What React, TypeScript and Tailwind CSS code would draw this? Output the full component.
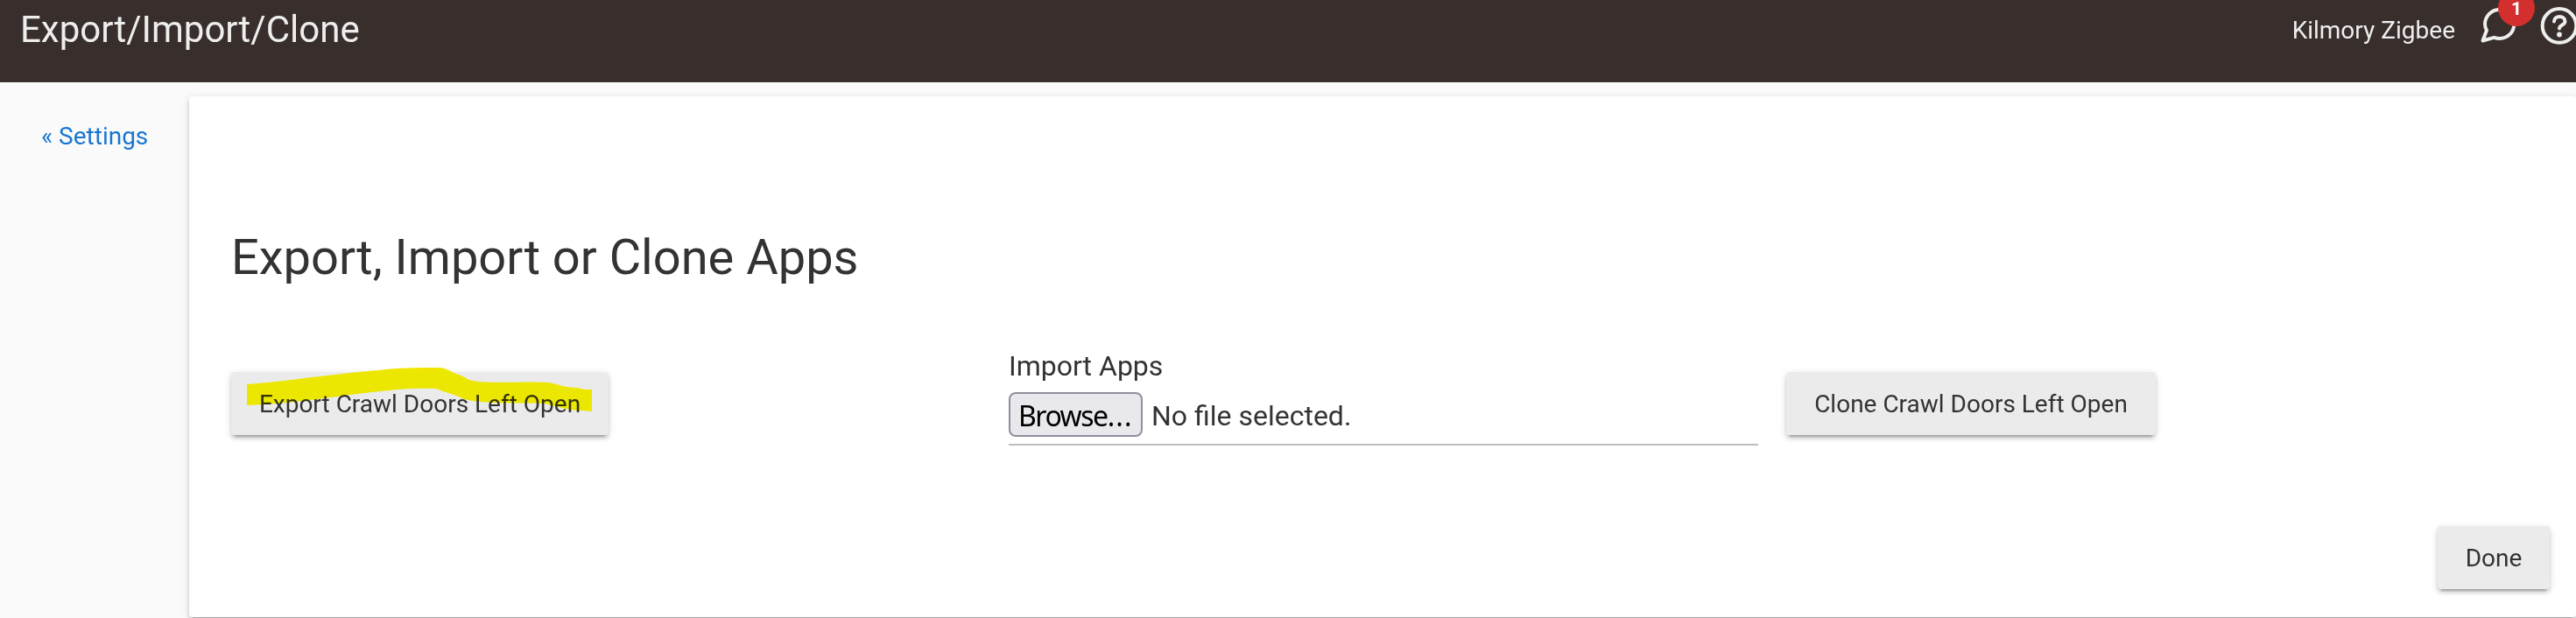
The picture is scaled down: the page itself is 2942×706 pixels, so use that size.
const raised =
  "shadow-[0_4px_4px_0_rgba(0,0,0,0.14),0_6px_2px_-4px_rgba(0,0,0,0.2),0_2px_10px_0_rgba(0,0,0,0.12)]";

function RaisedButton({ label, width }: { label: string; width: string }) {
  return (
    <button
      type="button"
      className={`${width} ${raised} h-[72px] shrink-0 rounded bg-[#ebebeb] text-center text-[28px] leading-[74px] whitespace-nowrap`}
    >
      {label}
    </button>
  );
}

function Header() {
  return (
    <header className="flex h-[94px] items-start justify-between overflow-hidden bg-[#382e2c] text-[#eeeeee]">
      <h1 className="pt-[9px] pl-[23px] text-[42px] leading-[49px]">Export/Import/Clone</h1>

      <div className="flex shrink-0 items-start">
        <span className="mr-[24px] pt-[18px] text-[28px] leading-[33px]">Kilmory Zigbee</span>

        <div className="relative mr-[18px] h-[60px] w-[54px]">
          <svg viewBox="0 0 54 60" className="h-[60px] w-[54px]" fill="none" stroke="currentColor" strokeWidth="4" strokeLinejoin="round">
            <path d="M7.500 46.500 L12 34.500 C10.500 32 10 30 10 27.500 C10 18.500 17.500 11 26.700 11 C36 11 43.300 18.500 43.300 27.500 C43.300 36.700 36 44 26.700 44 C24.500 44 22.500 43.600 20.500 42.800 Z" />
          </svg>
          <span className="absolute -top-[12px] left-[25px] flex h-[42px] w-[42px] items-center justify-center rounded-full bg-[#d32f2f] pt-[2px] text-[21px] leading-[18px] font-bold text-white">
            1
          </span>
        </div>

        <svg viewBox="0 0 42 60" className="h-[60px] w-[42px]" fill="none" stroke="currentColor" strokeWidth="4" strokeLinecap="round">
          <circle cx="23" cy="29.400" r="19.300" />
          <path d="M17 24.500 C17 17 29.500 17 29.500 24.500 C29.500 28.500 23 28.500 23 32.500" />
          <circle cx="23" cy="39.500" r="2.900" fill="currentColor" stroke="none" />
        </svg>
      </div>
    </header>
  );
}

export default function App() {
  return (
    <div className="flex h-[706px] w-[2942px] flex-col overflow-hidden bg-[#fafafa] font-[Roboto,sans-serif] text-[#333333]">
      <Header />

      <div className="flex">
        <nav className="w-[216px] shrink-0 pt-[45px] pl-[47px]">
          <a href="#" className="text-[28px] leading-[33px] text-[#1976d2]">
            « Settings
          </a>
        </nav>

        <main className={`${raised} mt-4 flex h-[595px] grow flex-col rounded bg-white pl-12`}>
          <h2 className="pt-[151px] text-[56px] leading-[66px]">Export, Import or Clone Apps</h2>

          <div className="mt-[61px] grid h-[140px] grid-cols-[856px_856px_856px] gap-8">
            <div className="relative pt-[37px]">
              <RaisedButton label="Export Crawl Doors Left Open" width="w-[431px]" />
              {/* highlighter stroke */}
              <svg viewBox="0 0 431 80" className="absolute top-[29px] left-0 h-[80px] w-[431px] mix-blend-darken">
                <path
                  fill="#f0e700"
                  d="M18 22 L41 20 C80 16 120 10 168 6 C190 3 210 3 239 3 C248 4 252 9 260 11 C268 14 270 17 276 18 C300 22 340 18 362 20 C375 22 380 26 396 26 L403 28 L412 28 L412 53 L401 52 C385 52 372 47 358 44 C330 43 290 45 266 39 C255 33 248 33 234 27 C205 26 190 28 170 30 C120 35 80 43 36 45 L18 46 Z"
                />
              </svg>
            </div>

            <div>
              <div className="pt-[11px] text-[32px] leading-[38px]">Import Apps</div>
              <div className="mt-[11px] flex h-[61px] items-start border-b-2 border-[#bdbdbd]">
                <button
                  type="button"
                  className="h-[51px] w-[153px] rounded-lg border-2 border-[#8f8f9d] bg-[#e9e9ed] pl-[9px] text-left font-[Noto_Sans] text-[32px] leading-[49px] tracking-[-1.5px] text-black"
                >
                  Browse<span className="tracking-[1.1px]">...</span>
                </button>
                <span className="ml-[10px] text-[32px] leading-[54px]">No file selected.</span>
              </div>
            </div>

            <div className="pt-[37px]">
              <RaisedButton label="Clone Crawl Doors Left Open" width="w-[422px]" />
            </div>
          </div>

          <div className="mt-[73px] flex justify-end pr-[30px]">
            <RaisedButton label="Done" width="w-[128px]" />
          </div>
        </main>
      </div>
    </div>
  );
}
